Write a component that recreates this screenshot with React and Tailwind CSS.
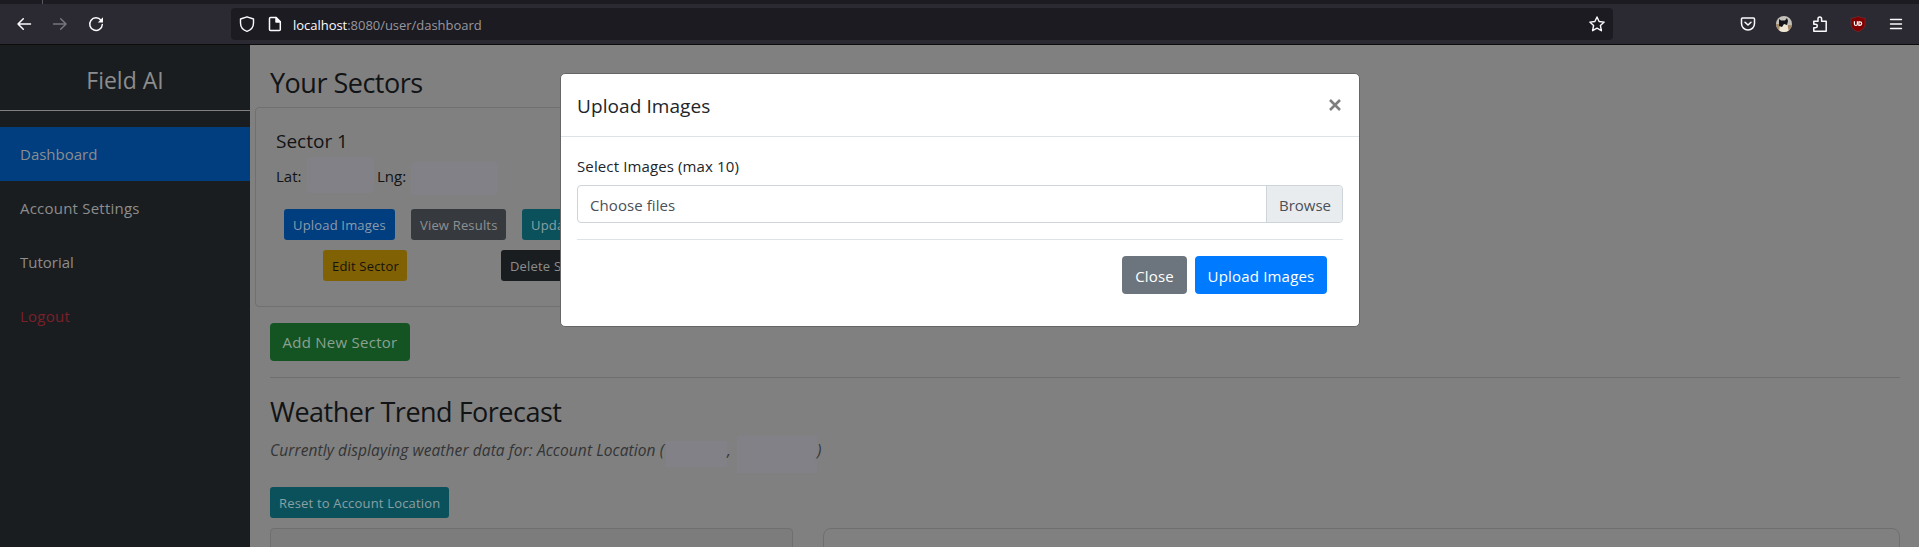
import React from "react";

// One line of text that never wraps.
function T({ className = "", children }) {
  return <span className={"block whitespace-nowrap " + className}>{children}</span>;
}

function SmallButton({ className, children }) {
  return (
    <button className={"flex h-[31px] shrink-0 items-center rounded-[3px] pt-px pl-[9px] text-[13px] leading-[21px] tracking-[0.18px] " + className}>
      <T>{children}</T>
    </button>
  );
}

function Toolbar() {
  return (
    <div className="flex h-[41px] items-center border-b border-[#0c0c0d] bg-[#2b2a33] text-[#fbfbfe]">
      <div className="flex w-[231px] items-center gap-5 pl-4">
        <svg className="h-4 w-4" viewBox="0 0 16 16" fill="none" stroke="currentColor" strokeWidth="1.5" strokeLinecap="round" strokeLinejoin="round">
          <path d="M14.500 8H2M7.300 2.700 2 8l5.300 5.300" />
        </svg>
        <svg className="h-4 w-4 text-[#77767d]" viewBox="0 0 16 16" fill="none" stroke="currentColor" strokeWidth="1.500" strokeLinecap="round" strokeLinejoin="round">
          <path d="M1.500 8H14M8.700 2.700 14 8l-5.300 5.300" />
        </svg>
        <svg className="h-4 w-4" viewBox="0 0 16 16" fill="none" stroke="currentColor" strokeWidth="1.500" strokeLinecap="round">
          <path d="M13 4.300A6.300 6.300 0 1 0 14.300 8.500" />
          <path d="M15 1.300V6.500H9.800Z" fill="currentColor" stroke="none" />
        </svg>
      </div>
      <div className="flex h-8 w-[1382px] items-center rounded bg-[#1c1b22] pl-2">
        <svg className="h-4 w-4" viewBox="0 0 16 16" fill="none" stroke="currentColor" strokeWidth="1.400" strokeLinejoin="round">
          <path d="M8 .8 14.500 3v4c0 4.500-3.500 7.300-6.500 8.300C5 14.300 1.500 11.500 1.500 7V3Z" />
        </svg>
        <svg className="ml-3 h-4 w-4" viewBox="0 0 16 16" fill="none" stroke="currentColor" strokeWidth="1.500" strokeLinejoin="round">
          <path d="M3.500 1.500H9L13.300 5.800V13.500a1 1 0 0 1-1 1H3.500a1 1 0 0 1-1-1V2.500a1 1 0 0 1 1-1Z" />
          <path d="M9 1.500V6h4.300Z" fill="currentColor" />
        </svg>
        <T className="ml-[10px] pt-0.5 text-[13px] leading-5 tracking-[-0.03px] text-[#98979e]">
          <span className="text-[#fbfbfe]">localhost</span>:8080/user/dashboard
        </T>
        <svg className="mr-2 ml-auto h-4 w-4" viewBox="0 0 16 16" fill="none" stroke="currentColor" strokeWidth="1.400" strokeLinejoin="round">
          <path d="M8 1 10.100 5.500 15.200 6.100 11.400 9.500 12.400 14.700 8 12.200 3.600 14.700 4.600 9.500 .8 6.100 5.900 5.500Z" />
        </svg>
      </div>
      <div className="ml-auto flex items-center pr-[15px]">
        <svg className="h-4 w-4" viewBox="0 0 16 16" fill="none" stroke="currentColor" strokeWidth="1.500" strokeLinecap="round" strokeLinejoin="round">
          <path d="M2.500 2h11a1 1 0 0 1 1 1v4.500a6.500 6.500 0 0 1-13 0V3a1 1 0 0 1 1-1Z" />
          <path d="M5 6.200 8 9l3-2.800" />
        </svg>
        <svg className="ml-5 h-4 w-4" viewBox="0 0 16 16">
          <clipPath id="avatar"><circle cx="8" cy="8" r="8" /></clipPath>
          <g clipPath="url(#avatar)">
            <path fill="#c3bfb9" d="M0 0h16v16H0z" />
            <path fill="#a58a68" d="M0 8h4v8H0zM12 9h4v7h-4z" />
            <path fill="#f0e6d4" d="M4 8h7l2 8H3z" />
            <path fill="#15151a" d="M3 3l2 1.500h4L11 2l1 3-1 4-3-1-2 3-3-1z" />
          </g>
        </svg>
        <svg className="ml-5 h-4 w-4" viewBox="0 0 16 16" fill="none" stroke="currentColor" strokeWidth="1.500" strokeLinejoin="round">
          <path d="M1.800 15.200V11.700H3.600a1.700 1.700 0 0 0 0-3.400H1.800V5.300H6V2.700a1.800 1.800 0 0 1 3.600 0V5.300H14.200V15.200Z" />
        </svg>
        <svg className="ml-[22px] h-4 w-4" viewBox="0 0 16 16">
          <path fill="#800000" stroke="#9c3a3f" strokeWidth="0.4" d="M8 .2c2 1.500 4.500 1.900 7 1.900v6c0 4-3.500 6.200-7 7.700-3.500-1.500-7-3.700-7-7.700v-6c2.500 0 5-.4 7-1.900Z" />
          <path d="M4.400 5.300v2.700a1.500 1.500 0 0 0 3 0v-2.700M8.900 5.800h1a1.700 1.700 0 0 1 0 3.500H8.900Z" fill="none" stroke="#fff" strokeWidth="1.200" />
        </svg>
        <svg className="ml-[22px] h-4 w-4" viewBox="0 0 16 16" stroke="currentColor" strokeWidth="1.400" strokeLinecap="round">
          <path d="M2.500 3.500h11M2.500 8h11M2.500 12.500h11" />
        </svg>
      </div>
    </div>
  );
}

function Sidebar() {
  return (
    <nav className="w-[250px] shrink-0 bg-[#1a1d20] text-[15px] leading-6 text-[#8c8d8e]">
      <div className="mb-4 flex h-[66px] items-center justify-center border-b border-[#808080] pt-1">
        <T className="text-[23px] leading-7">Field AI</T>
      </div>
      <div className="flex h-[54px] items-center bg-[#003e80] pl-5"><T>Dashboard</T></div>
      <div className="flex h-[54px] items-center pl-5"><T className="tracking-[0.22px]">Account Settings</T></div>
      <div className="flex h-[54px] items-center pl-5"><T>Tutorial</T></div>
      <div className="flex h-[54px] items-center pl-5 text-[#7a2029]"><T className="tracking-[0.25px]">Logout</T></div>
    </nav>
  );
}

function SectorCard() {
  return (
    <div className="ml-[5px] h-[200px] w-[530px] rounded border border-[#707070] px-5 pt-[19px]">
      <T className="text-[19px] leading-7">Sector 1</T>
      <div className="mt-px flex h-[38px] items-start text-[15px]">
        <T className="w-[31px] pt-2 leading-6">Lat:</T>
        <div className="mt-px h-9 w-[67px] rounded-sm bg-[#818187]" />
        <T className="ml-[3px] w-[34px] pt-2 leading-6">Lng:</T>
        <div className="mt-[6px] h-[33px] w-[87px] rounded-sm bg-[#818187]" />
      </div>
      <div className="mt-[15px] flex gap-4 pl-2">
        <SmallButton className="w-[111px] bg-[#003e80] text-[#8c9bab]">Upload Images</SmallButton>
        <SmallButton className="w-[95px] bg-[#363a3f] text-[#8e9092]">View Results</SmallButton>
        <SmallButton className="w-[80px] bg-[#0b515c] text-[#89a0a4]">Update</SmallButton>
      </div>
      <div className="mt-[10px] flex gap-[94px] pl-[47px]">
        <SmallButton className="w-[84px] bg-[#806104] text-[#15130c]">Edit Sector</SmallButton>
        <SmallButton className="w-[100px] bg-[#1a1d20] text-[#8c8d8e]">Delete Sector</SmallButton>
      </div>
    </div>
  );
}

function Content() {
  return (
    <main className="min-w-0 flex-1 bg-[#808080] text-[#111315]">
      <T className="h-[62px] pt-[21px] pl-5 text-[27px] leading-[34px] tracking-[-0.5px]">Your Sectors</T>
      <SectorCard />
      <div className="mx-[19px] flex flex-col items-start pt-4 pl-px">
        <button className="flex h-[38px] w-[140px] items-center justify-center rounded bg-[#145423] pb-px text-[15px] leading-6 tracking-[0.25px] text-[#8ba191]">
          <T>Add New Sector</T>
        </button>
        <div className="mt-4 h-px w-full bg-[#6f6f6f]" />
        <T className="mt-[17px] text-[27px] leading-[34px] tracking-[-0.5px]">Weather Trend Forecast</T>
        <div className="mt-[7px] flex h-[38px] items-start text-[15.5px] leading-6 text-[#333436] italic">
          <T className="w-[396px] pt-0.5 tracking-[0.1px]">Currently displaying weather data for: Account Location (</T>
          <div className="mt-[5px] h-[26px] w-[61px] bg-[#818187]" />
          <T className="w-[10px] pt-0.5">,</T>
          <div className="h-[37px] w-20 bg-[#818187]" />
          <T className="pt-0.5">)</T>
        </div>
        <SmallButton className="mt-[13px] w-[179px] bg-[#0b515c] text-[#89a0a4]">Reset to Account Location</SmallButton>
        <div className="mt-[10px] flex w-full gap-[30px]">
          <div className="h-[60px] w-[523px] rounded border border-[#6f6f6f] bg-[#7c7c7c]" />
          <div className="h-[60px] flex-1 rounded-lg border border-[#6f6f6f]" />
        </div>
      </div>
    </main>
  );
}

function Modal() {
  return (
    <div className="absolute top-[28px] left-[560px] h-[254px] w-[800px] rounded-[5px] border border-[#666666] bg-white text-[#212529]">
      <div className="flex h-[63px] items-start justify-between border-b border-[#dee2e6] pt-4 pr-[18px] pl-4">
        <T className="pt-px text-[19px] leading-[30px] tracking-[0.08px]">Upload Images</T>
        <svg className="mt-[9px] h-[12px] w-[12px]" viewBox="0 0 12 12" stroke="#7f7f7f" strokeWidth="2.600">
          <path d="M1 1l10 10M11 1 1 11" />
        </svg>
      </div>
      <div className="px-4 pt-4">
        <T className="relative top-px text-[15px] leading-6 tracking-[0.12px]">Select Images (max 10)</T>
        <div className="mt-2 flex h-[38px] overflow-hidden rounded border border-[#ced4da] text-[15px] leading-6 text-[#495057]">
          <T className="flex-1 pt-[7px] pl-3 tracking-[0.08px]">Choose files</T>
          <div className="w-[76px] border-l border-[#ced4da] bg-[#e9ecef] pt-[7px] pl-3"><T>Browse</T></div>
        </div>
        <div className="mt-4 flex gap-2 border-t border-[#dee2e6] pt-4 pr-4 text-[15px] leading-6 text-white">
          <button className="ml-auto flex h-[38px] w-[65px] items-center justify-center rounded bg-[#6c757d] pt-px tracking-[0.15px]"><T>Close</T></button>
          <button className="flex h-[38px] w-[132px] items-center justify-center rounded bg-[#007bff] pt-px tracking-[0.18px]"><T>Upload Images</T></button>
        </div>
      </div>
    </div>
  );
}

export default function App() {
  return (
    <div className="flex h-[547px] w-full flex-col overflow-hidden font-['Open_Sans',sans-serif]">
      <div className="h-1 shrink-0 bg-[#1c1b22] pl-[42px]"><div className="h-1 w-px bg-[#5a5961]" /></div>
      <Toolbar />
      <div className="relative flex min-h-0 flex-1 overflow-hidden">
        <Sidebar />
        <Content />
        <Modal />
      </div>
    </div>
  );
}
